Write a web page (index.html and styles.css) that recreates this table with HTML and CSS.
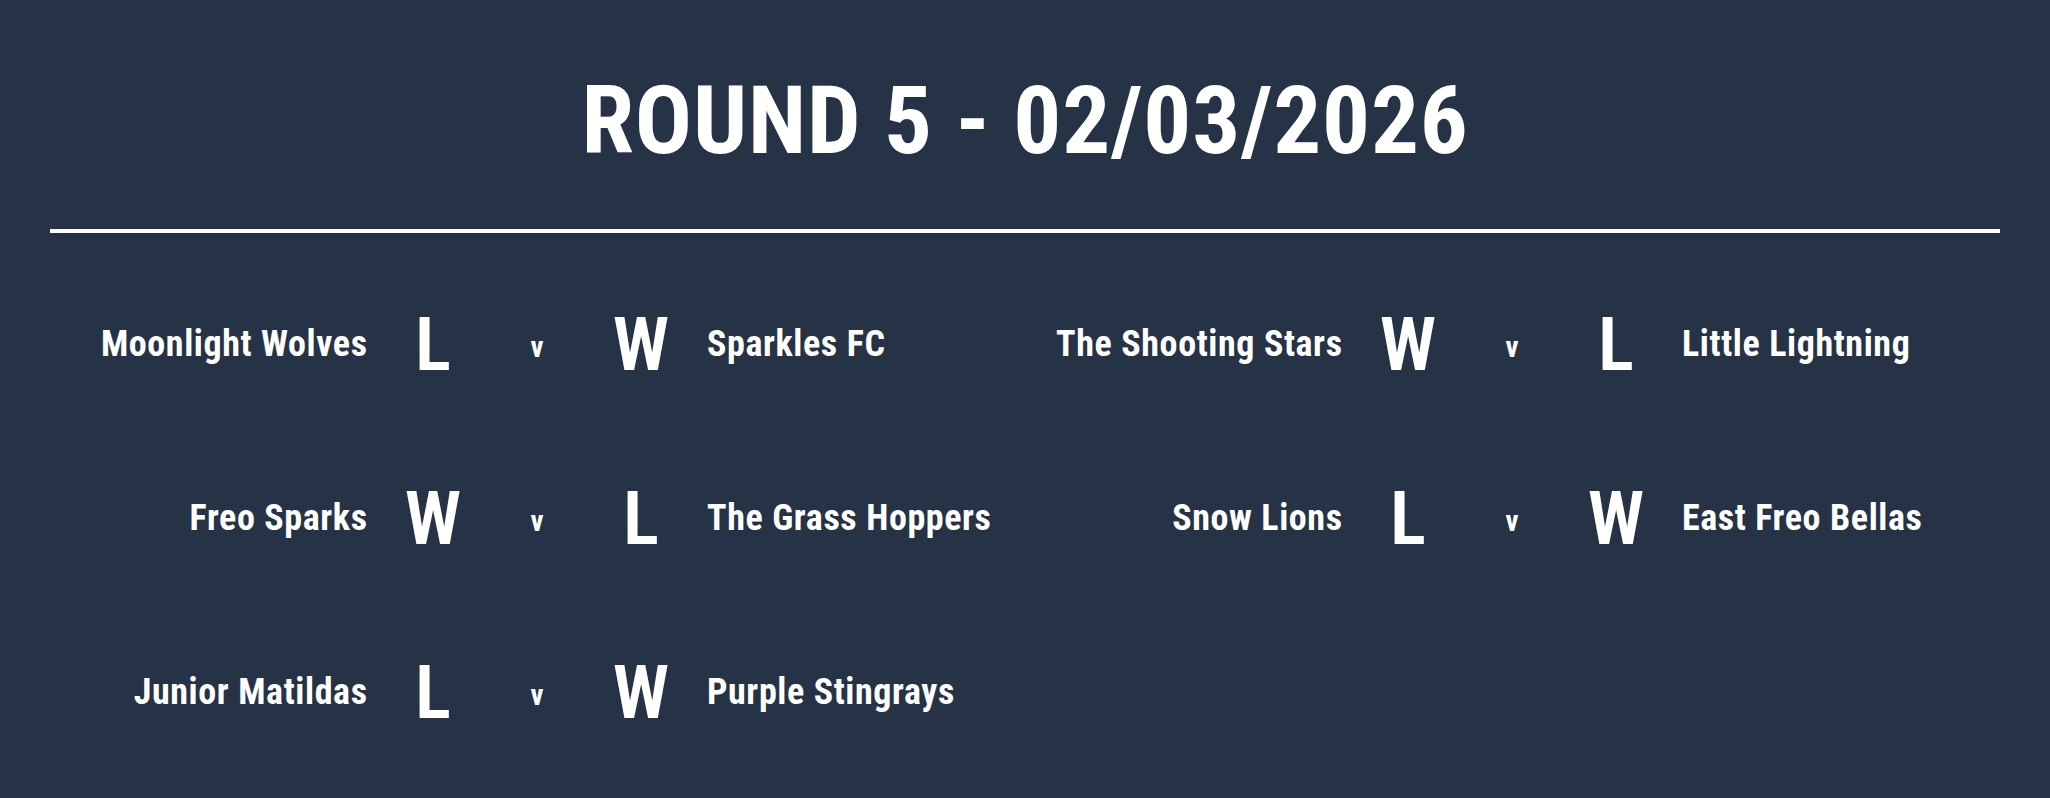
FILE: index.html
```html
<!DOCTYPE html>
<html lang="en">
<head>
<meta charset="utf-8">
<title>Round 5 Results</title>
<link rel="stylesheet" href="styles.css">
</head>
<body>
<main class="page">
  <header class="header">
    <h1 class="title">ROUND 5 - 02/03/2026</h1>
  </header>
  <hr class="divider">
  <section class="matches">
    <div class="match">
      <span class="team team-home">Moonlight Wolves</span>
      <span class="result">L</span>
      <span class="vs">v</span>
      <span class="result">W</span>
      <span class="team team-away">Sparkles FC</span>
    </div>
    <div class="match">
      <span class="team team-home">The Shooting Stars</span>
      <span class="result">W</span>
      <span class="vs">v</span>
      <span class="result">L</span>
      <span class="team team-away">Little Lightning</span>
    </div>
    <div class="match">
      <span class="team team-home">Freo Sparks</span>
      <span class="result">W</span>
      <span class="vs">v</span>
      <span class="result">L</span>
      <span class="team team-away">The Grass Hoppers</span>
    </div>
    <div class="match">
      <span class="team team-home">Snow Lions</span>
      <span class="result">L</span>
      <span class="vs">v</span>
      <span class="result">W</span>
      <span class="team team-away">East Freo Bellas</span>
    </div>
    <div class="match">
      <span class="team team-home">Junior Matildas</span>
      <span class="result">L</span>
      <span class="vs">v</span>
      <span class="result">W</span>
      <span class="team team-away">Purple Stingrays</span>
    </div>
  </section>
</main>
</body>
</html>
```
FILE: styles.css
```css
html, body {
  margin: 0;
  padding: 0;
  background: #263245;
}
body {
  color: #ffffff;
  font-family: "Roboto", "Liberation Sans", sans-serif;
  font-weight: 700;
  font-stretch: 78%;
  overflow: hidden;
}
.page {
  width: 1950px;
  margin: 0 50px;
  min-height: 798px;
}
.header {
  padding-top: 73px;
  display: flex;
  justify-content: center;
}
.title {
  margin: 0;
  font-size: 95px;
  line-height: 1;
  font-weight: 700;
  letter-spacing: 0.8px;
}
.divider {
  margin: 61px 0 0;
  border: 0;
  height: 4px;
  background: #ffffff;
}
.matches {
  margin-top: 24px;
  display: grid;
  grid-template-columns: 975px 975px;
  grid-auto-rows: 174px;
}
.match {
  display: grid;
  grid-template-columns: 317px 132px 76px 132px 1fr;
  align-items: center;
}
.team {
  font-size: 36px;
  line-height: 1;
  white-space: nowrap;
  letter-spacing: 0.6px;
}
.team-home {
  text-align: right;
  margin-right: -0.6px;
}
.team-away {
  text-align: left;
}
.result {
  font-size: 75px;
  line-height: 1;
  text-align: center;
  font-weight: 600;
}
.vs {
  font-size: 29px;
  line-height: 1;
  text-align: center;
  margin-top: 7px;
}
```
